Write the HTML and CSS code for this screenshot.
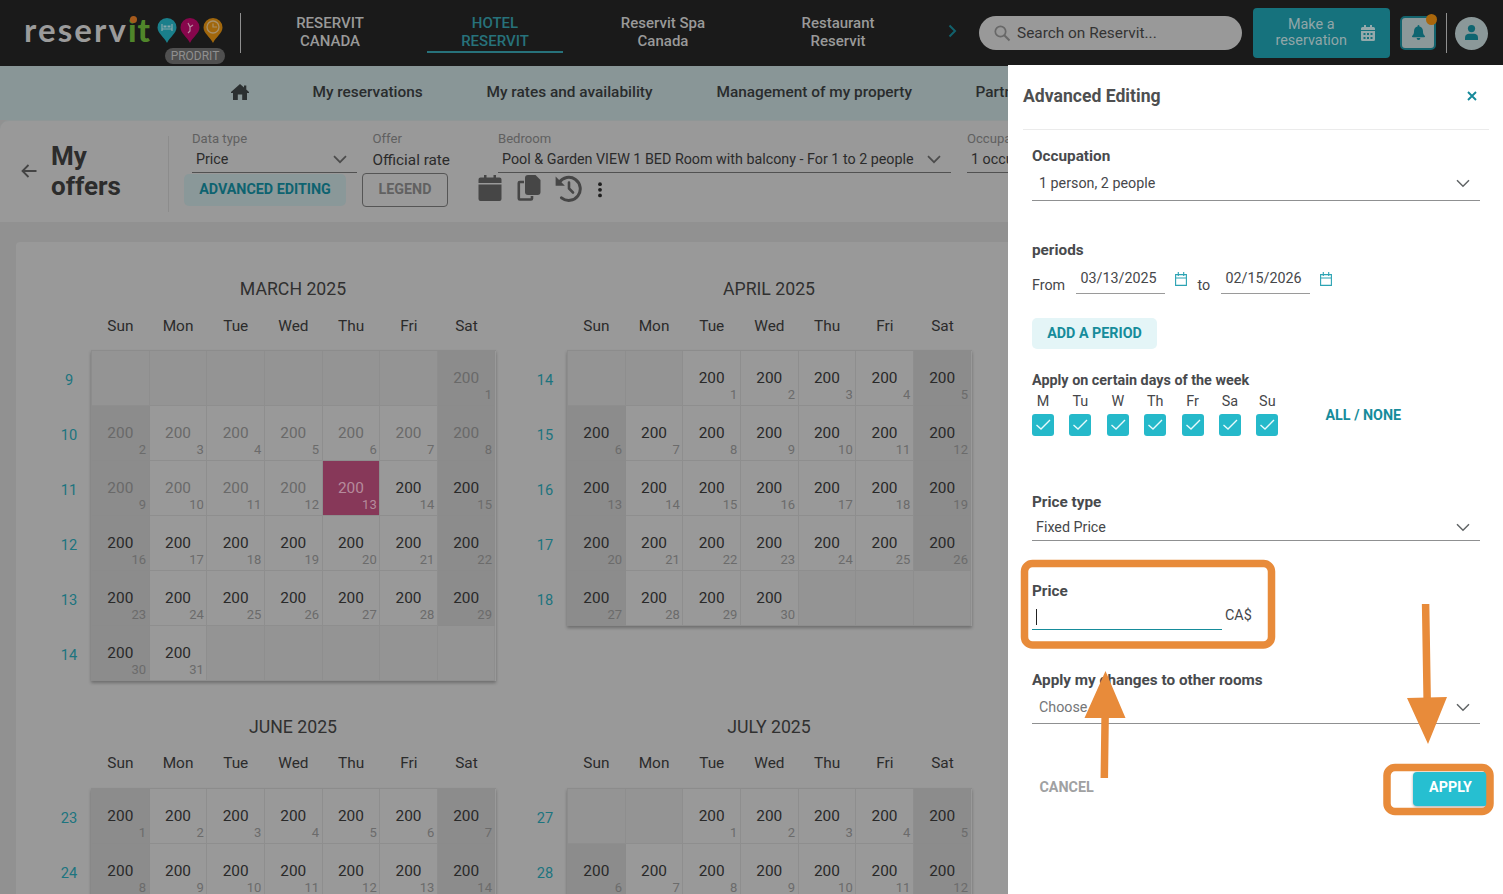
FILE: index.html
```html
<!DOCTYPE html>
<html lang="en">
<head>
<meta charset="utf-8">
<title>Reservit - My offers</title>
<link rel="stylesheet" href="styles.css">
</head>
<body>
<div class="app">
  <header class="topbar">
    <div class="brand">
      <div class="brand-row">
        <span class="wordmark">reserv<span class="wordmark-end">it</span><i class="wordmark-dot"></i></span>
        <svg class="pins" width="66" height="26" viewBox="0 0 66 26">
          <path d="M10 25C7 19 .5 15 .5 9.500a9.500 9.500 0 0 1 19 0C19.500 15 13 19 10 25z" fill="#1a7f8b"/>
          <path d="M33 25C30 19 23.500 15 23.500 9.500a9.500 9.500 0 0 1 19 0C42.500 15 36 19 33 25z" fill="#87064c"/>
          <path d="M56 25C53 19 46.500 15 46.500 9.500a9.500 9.500 0 0 1 19 0C65.500 15 59 19 56 25z" fill="#a1670c"/>
          <path d="M5 6v7M15 6v7M5 11h10" stroke="#86a8ac" stroke-width="1.200" fill="none"/><path d="M6.500 7.500h3v2h-3zM10.500 7.500h3v2h-3z" fill="#86a8ac"/>
          <path d="M31 5l2 4 3-2M33 9v4l-2 2" stroke="#b58a9f" stroke-width="1.200" fill="none"/>
          <circle cx="56" cy="9" r="6" stroke="#a8906a" stroke-width="1.300" fill="none"/>
          <path d="M56 5.500V9h4" stroke="#a8906a" stroke-width="1.200" fill="none"/>
        </svg>
      </div>
      <span class="env">PRODRIT</span>
    </div>
    <div class="rule"></div>
    <nav class="sites">
      <a class="site">RESERVIT<br>CANADA</a>
      <a class="site active">HOTEL<br>RESERVIT</a>
      <a class="site">Reservit Spa<br>Canada</a>
      <a class="site last">Restaurant<br>Reservit</a>
    </nav>
    <svg class="next" width="10" height="14" viewBox="0 0 10 14"><path d="M1.500 1.500L7 7l-5.500 5.500" fill="none" stroke="#12616c" stroke-width="2"/></svg>
    <div class="search">
      <svg width="17" height="17" viewBox="0 0 17 17"><circle cx="6.500" cy="6.500" r="5.200" fill="none" stroke="#686868" stroke-width="1.700"/><path d="M10.300 10.300l5.200 5.200" stroke="#686868" stroke-width="2"/></svg>
      <span>Search on Reservit...</span>
    </div>
    <button class="reserve"><span>Make a<br>reservation</span>
      <svg width="14" height="16" viewBox="0 0 14 16"><path fill="#94a9ab" d="M3 0h2v2h4V0h2v2h1.500A1.500 1.500 0 0 1 14 3.500V5H0V3.500A1.500 1.500 0 0 1 1.500 2H3zM0 6h14v8.500a1.500 1.500 0 0 1-1.500 1.500h-11A1.500 1.500 0 0 1 0 14.500z"/><path d="M2.500 8h2v2h-2zM6 8h2v2H6zM9.500 8h2v2h-2zM2.500 12h2v2h-2zM6 12h2v2H6zM9.500 12h2v2h-2z" fill="#16727d"/></svg>
    </button>
    <button class="bell">
      <svg width="13" height="15" viewBox="0 0 14 16"><path fill="#0f6570" d="M7 0a1 1 0 0 1 1 1v.6C10.300 2.100 11.800 4 11.800 6.500c0 2.700.7 4 1.900 5.100.7.700.2 1.400-.6 1.400H.9c-.8 0-1.300-.7-.6-1.400 1.200-1.100 1.900-2.400 1.900-5.100C2.200 4 3.700 2.100 6 1.600V1a1 1 0 0 1 1-1zM5 14h4a2 2 0 0 1-4 0z"/></svg>
      <i class="badge"></i>
    </button>
    <div class="rule rule-right"></div>
    <div class="avatar"><svg width="13" height="15" viewBox="0 0 13 15"><circle cx="6.500" cy="3.600" r="3.600" fill="#0f6570"/><path d="M0 15v-2.500C0 10 2 8.800 4 8.800h5c2 0 4 1.200 4 3.700V15z" fill="#0f6570"/></svg></div>
  </header>

  <nav class="menu">
    <svg class="home" width="18" height="16" viewBox="0 0 18 16"><path fill="#2c3031" d="M9 0l4 3.500V1.500h2.300v4L18 8v1h-2v7h-4.800v-5.500H6.800V16H2V9H0V8z"/></svg>
    <a class="m1">My reservations</a>
    <a class="m2">My rates and availability</a>
    <a class="m3">Management of my property</a>
    <a class="m4">Partners</a>
  </nav>

  <section class="toolbar">
    <svg class="back" width="16" height="14" viewBox="0 0 16 14"><path d="M15.500 7H2M7.500 1L1.500 7l6 6" fill="none" stroke="#444" stroke-width="1.800"/></svg>
    <h1>My<br>offers</h1>
    <div class="filters">
      <div class="fields">
        <div class="field f-type"><label>Data type</label><div class="value">Price<svg class="chev" width="14" height="9" viewBox="0 0 14 9"><path d="M1 1.200l6 6 6-6"/></svg></div></div>
        <div class="field f-offer"><label>Offer</label><div class="value plain">Official rate</div></div>
        <div class="field f-room"><label>Bedroom</label><div class="value">Pool &amp; Garden VIEW 1 BED Room with balcony - For 1 to 2 people<svg class="chev" width="14" height="9" viewBox="0 0 14 9"><path d="M1 1.200l6 6 6-6"/></svg></div></div>
        <div class="field f-occ"><label>Occupation</label><div class="value">1 occupant</div></div>
      </div>
      <div class="actions">
        <button class="btn-soft-dim">ADVANCED EDITING</button>
        <button class="btn-outline">LEGEND</button>
        <svg class="ic-cal" width="24" height="27" viewBox="0 0 24 27"><path fill="#464646" d="M6 0h2.500v2.500h7V0H18v2.500h3.500A2 2 0 0 1 23.500 4.500V8H.5V4.500a2 2 0 0 1 2-2H6zM.5 9.500h23V24a2 2 0 0 1-2 2h-19a2 2 0 0 1-2-2z"/></svg>
        <svg class="ic-copy" width="24" height="27" viewBox="0 0 24 27"><path fill="#464646" d="M11 0h7.500L23.500 5v12a3 3 0 0 1-3 3H11a3 3 0 0 1-3-3V3a3 3 0 0 1 3-3z"/><path d="M7 7H2.800A1 1 0 0 0 1.800 8v15.500a1 1 0 0 0 1 1H14a1 1 0 0 0 1-1V21" fill="none" stroke="#464646" stroke-width="2.600"/></svg>
        <svg class="ic-hist" width="27" height="27" viewBox="0 0 27 27"><path d="M4.200 7.500A11.500 11.500 0 1 1 6.500 22.800" fill="none" stroke="#464646" stroke-width="3" stroke-linecap="round"/><path d="M.6 1.500v9.300h9.300z" fill="#464646"/><path d="M14 7.500v6l4 4" fill="none" stroke="#464646" stroke-width="2.600" stroke-linecap="round"/></svg>
        <svg class="ic-dots" width="6" height="18" viewBox="0 0 6 18"><g fill="#1f1f1f"><circle cx="3" cy="3.200" r="1.900"/><circle cx="3" cy="8.800" r="1.900"/><circle cx="3" cy="14.400" r="1.900"/></g></svg>
      </div>
    </div>
  </section>

  <main class="board" id="board"></main>

  <aside class="drawer">
    <div class="drawer-head">
      <h2>Advanced Editing</h2>
      <svg width="10" height="10" viewBox="0 0 10 10"><path d="M1 1l8 8M9 1L1 9" stroke="#15899a" stroke-width="1.900"/></svg>
    </div>
    <div class="form">
      <h3 class="h-occ">Occupation</h3>
      <div class="select s-occ">1 person, 2 people<svg class="chev" width="14" height="9" viewBox="0 0 14 9"><path d="M1 1.200l6 6 6-6"/></svg></div>
      <h3 class="h-per">periods</h3>
      <div class="dates">
        <span class="word">From</span><span class="date">03/13/2025</span>
        <svg class="dcal" width="12" height="14" viewBox="0 0 12 14"><path d="M.6 2.600h10.800v10.800H.6zM.6 6h10.800M3.300 0v4M8.700 0v4" fill="none" stroke="#2ba3b3" stroke-width="1.100"/></svg>
        <span class="word to">to</span><span class="date">02/15/2026</span>
        <svg class="dcal" width="12" height="14" viewBox="0 0 12 14"><path d="M.6 2.600h10.800v10.800H.6zM.6 6h10.800M3.300 0v4M8.700 0v4" fill="none" stroke="#2ba3b3" stroke-width="1.100"/></svg>
      </div>
      <button class="btn-soft">ADD A PERIOD</button>
      <h3 class="h-days">Apply on certain days of the week</h3>
      <div class="days">
        <div class="daylist" id="daylist"></div>
        <a class="toggle-all">ALL / NONE</a>
      </div>
      <h3 class="h-type">Price type</h3>
      <div class="select s-type">Fixed Price<svg class="chev" width="14" height="9" viewBox="0 0 14 9"><path d="M1 1.200l6 6 6-6"/></svg></div>
      <h3 class="h-price">Price</h3>
      <div class="price"><div class="price-input"><i class="caret"></i></div><span>CA$</span></div>
      <h3 class="h-rooms">Apply my changes to other rooms</h3>
      <div class="select s-rooms">Choose<svg class="chev" width="14" height="9" viewBox="0 0 14 9"><path d="M1 1.200l6 6 6-6"/></svg></div>
      <div class="footer"><a class="cancel">CANCEL</a><button class="apply">APPLY</button></div>
    </div>
  </aside>

  <svg class="marks" width="1503" height="894" viewBox="0 0 1503 894">
    <g fill="none" stroke="#e88b3a" stroke-width="7.500">
      <rect x="1024.500" y="563.500" width="247" height="81.500" rx="8"/>
      <rect x="1387" y="767.500" width="103" height="44" rx="8"/>
      <path d="M1104.300 778L1105.200 710M1425.600 604L1427.200 702"/>
    </g>
    <path fill="#e88b3a" d="M1105.500 671l20 47h-41zM1428 744l-21-46 40-1z"/>
  </svg>
</div>
<script src="script.js"></script>
</body>
</html>
```

FILE: styles.css
```css
* { box-sizing: border-box; }
body { margin: 0; font-family: Roboto, "Liberation Sans", sans-serif; background: #919191; color: #2b2b2b; }
button { font-family: inherit; border: 0; padding: 0; }
h1, h2, h3 { margin: 0; }
.app { position: relative; width: 1503px; height: 894px; overflow: hidden; display: flex; flex-direction: column; }

.topbar { height: 66px; flex: none; background: #1a1a1a; display: flex; align-items: flex-start; }
.brand { width: 240px; padding: 12px 0 0 24px; height: 66px; }
.brand-row { display: flex; height: 36px; }
.wordmark { position: relative; width: 132.5px; font: 700 33px/35px Lato, sans-serif; letter-spacing: 2.1px; color: #9b9b9b; white-space: nowrap; }
.wordmark-end { color: #50862a; font-weight: 900; letter-spacing: 1px; }
.wordmark-dot { position: absolute; left: 106px; top: 4px; width: 7px; height: 7px; border-radius: 50%; background: #a65a1c; }
.pins { margin-top: 6px; }
.env { display: block; width: 60px; height: 16px; margin-left: 141px; border-radius: 8px; background: #505050; color: #8f8f8f; font-size: 12px; line-height: 16px; text-align: center; }
.rule { width: 1px; height: 40px; margin-top: 13px; background: #8f8f8f; }
.sites { display: flex; margin-left: 21px; gap: 29px; }
.site { width: 136px; height: 53px; padding: 14px 0 0; font-size: 15px; font-weight: 500; line-height: 18px; text-align: center; color: #999; }
.site.active { color: #27727b; border-bottom: 2px solid #27727b; }
.site:nth-child(3) { width: 142px; }
.site.last { width: 150px; }
.next { margin: 24px 0 0 35px; }
.search { display: flex; gap: 6px; align-items: center; width: 263px; height: 34px; margin: 16px 0 0 21px; padding-left: 15px; border-radius: 17px; background: #999; color: #343434; font-size: 15.4px; }
.reserve { display: flex; align-items: center; justify-content: space-between; width: 137px; height: 50px; margin: 8px 0 0 11px; padding: 0 15px 0 22.5px; border-radius: 4px; background: #16727d; color: #91a6a8; font-size: 14.400px; line-height: 16px; }
.bell { position: relative; display: flex; align-items: center; justify-content: center; width: 36px; height: 34px; margin: 16px 0 0 10px; padding-bottom: 2px; border: 2px solid #13636d; border-radius: 5px; background: #8b9899; }
.badge { position: absolute; right: -3px; top: -4px; width: 11px; height: 11px; border-radius: 50%; background: #a9660b; }
.rule-right { margin-left: 10px; }
.avatar { display: flex; align-items: center; justify-content: center; width: 33px; height: 33px; margin: 17px 0 0 8px; padding-bottom: 3px; border-radius: 50%; background: #8b9899; }

.menu { height: 54px; flex: none; display: flex; align-items: center; padding: 0 0 3px 231px; background: #899697; font-size: 15.4px; font-weight: 500; color: #292c2d; white-space: nowrap; }
.home { flex: none; }
.m1 { width: 110px; margin-left: 63.5px; }
.m2 { width: 166px; margin-left: 64px; }
.m3 { width: 196px; margin-left: 64px; }
.m4 { margin-left: 63px; }

.toolbar { height: 102px; flex: none; display: flex; border-radius: 9px 0 0 0; background: #999; border-top: 1px solid #8f9696; }
.back { flex: none; margin: 43px 0 0 21px; }
.toolbar h1 { width: 118px; height: 76px; margin: 15px 0 0 14px; padding-top: 5px; font-size: 26px; line-height: 30px; font-weight: 700; color: #2c2c2c; border-right: 1px solid #8c8c8c; }
.filters { margin-left: 15px; }
.fields { display: flex; height: 53px; padding-left: 8px; }
.field { flex: none; height: 53px; padding-top: 10px; white-space: nowrap; }
.field label { display: block; font-size: 13.1px; line-height: 16px; color: #606060; }
.value { display: flex; justify-content: space-between; align-items: center; height: 26px; padding: 0 10px 1px 4px; border-bottom: 1px solid #515151; font-size: 14.3px; color: #2b2b2b; }
.value.plain { border: 0; padding: 0; font-size: 15.3px; }
.f-type { width: 165px; }
.f-offer { width: 110px; margin-left: 15.5px; }
.f-room { width: 453px; margin-left: 15.5px; }
.f-occ { width: 165px; margin-left: 16px; }
.chev { flex: none; }
.chev path { fill: none; stroke: #4c4c4c; stroke-width: 1.7; }
.actions { display: flex; }
.btn-soft-dim { width: 162px; height: 32px; padding-bottom: 2px; border-radius: 5px; background: #8a9899; color: #0e6370; font-size: 14.3px; font-weight: 700; }
.btn-outline { width: 86px; height: 34px; margin: -1px 0 0 16px; padding-bottom: 2px; border: 1px solid #555; border-radius: 4px; background: #999; color: #616161; font-size: 14.3px; font-weight: 700; }
.ic-cal { margin: 1px 0 0 30px; }
.ic-copy { margin: 1px 0 0 15px; }
.ic-hist { margin: 1px 0 0 14px; }
.ic-dots { margin: 7px 0 0 14.5px; }

.board { flex: none; height: 700px; width: 1471px; margin: 20px 0 0 16px; padding: 33px 0 0 23px; background: #999; display: grid; grid-template-columns: 476px 476px; grid-auto-rows: 437.5px; border-radius: 4px; }
.month-title { margin-left: 52px; width: 404px; height: 28px; text-align: center; font-size: 17.7px; line-height: 28px; color: #303030; }
.month-body { display: grid; grid-template-columns: 52px 404.500px; }
.weekdays { grid-column: 2; display: grid; grid-template-columns: repeat(7, 57.7px); height: 47px; padding: 13.9px 0 0 .5px; text-align: center; font-size: 15.4px; line-height: 18px; }
.weeks { text-align: center; color: #1c747f; font-size: 14.6px; }
.weeks span { display: block; width: 60px; line-height: 55px; height: 55px; padding-top: 3px; }
.grid { align-self: start; display: grid; grid-template-columns: repeat(7, 1fr); grid-auto-rows: 55px; border-top: 1px solid #8c8c8c; border-left: 1px solid #8c8c8c; box-shadow: 0 2px 3px rgba(0, 0, 0, .28); }
.cell { position: relative; border-right: 1px solid #8e8e8e; border-bottom: 1px solid #8e8e8e; padding: 1px; text-align: center; line-height: 53px; font-size: 15.4px; color: #292929; background: #999; }
.cell small { position: absolute; right: 2.5px; bottom: 2px; font-size: 13px; line-height: 16px; color: #6b6b6b; }
.cell.weekend { background: #8c8c8c; border-color: #8b8b8b; }
.cell.empty { background: #949494; }
.cell.past { color: #696969; }
.cell.today { background: #873859; color: #b58b9c; }
.cell.today small { color: #b58b9c; }

.drawer { position: absolute; left: 1008px; top: 65px; width: 495px; height: 829px; background: #fff; color: #46474a; }
.drawer-head { display: flex; align-items: center; justify-content: space-between; height: 65px; margin: 0 14px 0 15px; padding: 0 12px 3px 0; border-bottom: 1px solid #ebebeb; }
.drawer-head h2 { font-size: 17.6px; font-weight: 700; color: #4e4f50; }
.form { padding: 16px 23px 0 24px; }
.form h3 { height: 20px; font-size: 15.3px; line-height: 20px; font-weight: 700; color: #484a4d; }
.form .h-days { font-size: 14.35px; line-height: 22px; }
.form .chev path { stroke: #606466; stroke-width: 1.5; }
.select { display: flex; align-items: center; justify-content: space-between; border-bottom: 1px solid #8f9091; padding: 0 10px 0 7px; font-size: 14.3px; }
.s-occ { height: 35px; }
.h-per { margin-top: 39px; }
.dates { display: flex; height: 34px; font-size: 14.3px; }
.word { width: 44px; padding-top: 17px; }
.word.to { width: 23.5px; margin-left: 10.5px; }
.date { width: 89px; height: 34px; padding-left: 4.5px; line-height: 36px; border-bottom: 1px solid #9a9a9a; }
.dcal { margin: 12px 0 0 10px; }
.btn-soft { display: block; width: 125px; height: 31px; margin-top: 24px; padding-bottom: 2px; border-radius: 5px; background: #e4f5f7; color: #168c9b; font-size: 14.3px; font-weight: 700; }
.h-days { margin-top: 21px; }
.days { display: flex; height: 46px; }
.daylist { display: flex; gap: 15.4px; width: 293.5px; }
.day { width: 22px; text-align: center; font-size: 14.4px; line-height: 23px; }
.day svg { display: block; margin-top: 1px; }
.toggle-all { margin-top: 17px; font-size: 14.3px; font-weight: 700; color: #168c9b; }
.h-type { margin-top: 56px; }
.s-type { height: 29px; padding: 2px 10px 0 4px; }
.h-price { margin-top: 40px; }
.price { display: flex; height: 29px; font-size: 14.4px; line-height: 30px; }
.price-input { width: 190px; margin-right: 3px; border-bottom: 1px solid #168c9b; padding: 8px 0 0 4px; }
.caret { display: block; width: 1px; height: 16px; background: #222; }
.h-rooms { margin-top: 40px; }
.s-rooms { height: 34px; padding-top: 1px; color: #757779; }
.footer { display: flex; justify-content: space-between; height: 34px; margin-top: 48px; padding-left: 7.5px; margin-right: -8px; }
.cancel { padding-top: 7px; font-size: 14.3px; font-weight: 700; color: #a0a1a2; }
.apply { width: 75px; height: 34px; border-radius: 4px; background: #26bfd1; color: #fff; font-size: 14.3px; font-weight: 700; padding-bottom: 5px; box-shadow: 0 1px 3px rgba(0, 0, 0, .35); }
.marks { position: absolute; left: 0; top: 0; }
```

FILE: script.js
```js
// Month calendars: first = weekday of day 1, weeks = week labels shown at the left.
const months = [
  { title: "MARCH 2025", first: 6, days: 31, weeks: [9, 10, 11, 12, 13, 14], today: 13 },
  { title: "APRIL 2025", first: 2, days: 30, weeks: [14, 15, 16, 17, 18] },
  { title: "JUNE 2025", first: 0, days: 30, weeks: [23, 24] },
  { title: "JULY 2025", first: 2, days: 31, weeks: [27, 28] }
];
const names = ["Sun", "Mon", "Tue", "Wed", "Thu", "Fri", "Sat"];

function cells(m) {
  let html = "";
  for (let i = 0; i < m.weeks.length * 7; i++) {
    const d = i - m.first + 1;
    if (d < 1 || d > m.days) { html += '<div class="cell empty"></div>'; continue; }
    let cls = "cell";
    if (i % 7 === 0 || i % 7 === 6) cls += " weekend";
    if (m.today && d < m.today) cls += " past";
    if (d === m.today) cls += " today";
    html += `<div class="${cls}">200<small>${d}</small></div>`;
  }
  return html;
}

document.getElementById("board").innerHTML = months.map(m => `
  <section class="month">
    <div class="month-title">${m.title}</div>
    <div class="month-body">
      <div class="weekdays">${names.map(n => `<span>${n}</span>`).join("")}</div>
      <div class="weeks">${m.weeks.map(w => `<span>${w}</span>`).join("")}</div>
      <div class="grid">${cells(m)}</div>
    </div>
  </section>`).join("");

document.getElementById("daylist").innerHTML = ["M", "Tu", "W", "Th", "Fr", "Sa", "Su"].map(d => `
  <div class="day">${d}<svg width="22" height="22" viewBox="0 0 22 22"><rect width="22" height="22" rx="3" fill="#25b9ca"/><path d="M4.500 11l4.500 4 9-9" fill="none" stroke="#e8fafc" stroke-width="1.400"/></svg></div>`).join("");
```
